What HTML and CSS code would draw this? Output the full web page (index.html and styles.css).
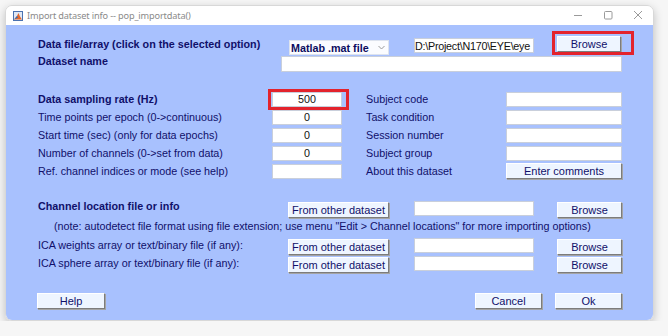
FILE: index.html
```html
<!DOCTYPE html>
<html lang="en">
<head>
  <meta charset="UTF-8">
  <title>Import dataset info -- pop_importdata()</title>
  <link rel="stylesheet" href="styles.css">
</head>
<body>
  <div class="window">
    <div class="titlebar">
      <svg class="app-icon" width="10" height="10" viewBox="0 0 10 10">
        <rect x="0.5" y="0.5" width="9" height="9" fill="#dfe8f5" stroke="#4a72b0"/>
        <path d="M1 8.5 L4 5 L5.5 2 L7 5.5 L9 8.5 Z" fill="#e4672a"/>
        <path d="M1 8.5 L4 5 L5 6.5 Z" fill="#2f6db8"/>
      </svg>
      <span class="title">Import dataset info -- pop_importdata()</span>
      <div class="controls">
        <svg width="10" height="10" viewBox="0 0 10 10"><path d="M1 5.5 H9" stroke="#9a9a9a" stroke-width="1"/></svg>
        <svg width="10" height="10" viewBox="0 0 10 10"><rect x="1.5" y="1.5" width="7.5" height="7.5" rx="1" fill="none" stroke="#9a9a9a"/></svg>
        <svg width="10" height="10" viewBox="0 0 10 10"><path d="M1 1 L9 9 M9 1 L1 9" stroke="#9a9a9a" stroke-width="1"/></svg>
      </div>
    </div>

    <div class="panel">
      <div class="row">
        <span class="label bold w-file">Data file/array (click on the selected option)</span>
        <div class="popup">
          <span>Matlab .mat file</span>
          <svg width="7" height="5" viewBox="0 0 7 5"><path d="M0.5 1 L3.5 4 L6.5 1" fill="none" stroke="#9a9a9a"/></svg>
        </div>
        <input class="edit path" type="text" value="D:\Project\N170\EYE\eye" readonly>
        <div class="marked">
          <button class="btn browse-top">Browse</button>
          <span class="redbox redbox-browse"></span>
        </div>
      </div>
      <div class="row">
        <span class="label bold w-name">Dataset name</span>
        <input class="edit name" type="text" readonly>
      </div>

      <div class="row section">
        <span class="label bold w-info">Data sampling rate (Hz)</span>
        <div class="marked">
          <input class="edit num" type="text" value="500" readonly>
          <span class="redbox redbox-rate"></span>
        </div>
        <span class="label w-side">Subject code</span>
        <input class="edit side" type="text" readonly>
      </div>
      <div class="row">
        <span class="label w-info">Time points per epoch (0-&gt;continuous)</span>
        <input class="edit num" type="text" value="0" readonly>
        <span class="label w-side">Task condition</span>
        <input class="edit side" type="text" readonly>
      </div>
      <div class="row">
        <span class="label w-info">Start time (sec) (only for data epochs)</span>
        <input class="edit num" type="text" value="0" readonly>
        <span class="label w-side">Session number</span>
        <input class="edit side" type="text" readonly>
      </div>
      <div class="row">
        <span class="label w-info">Number of channels (0-&gt;set from data)</span>
        <input class="edit num" type="text" value="0" readonly>
        <span class="label w-side">Subject group</span>
        <input class="edit side" type="text" readonly>
      </div>
      <div class="row">
        <span class="label w-info">Ref. channel indices or mode (see help)</span>
        <input class="edit num" type="text" readonly>
        <span class="label w-side">About this dataset</span>
        <button class="btn side">Enter comments</button>
      </div>

      <div class="row section">
        <span class="label bold w-chan">Channel location file or info</span>
        <button class="btn other">From other dataset</button>
        <input class="edit file" type="text" readonly>
        <button class="btn browse">Browse</button>
      </div>
      <div class="row note">
        (note: autodetect file format using file extension; use menu "Edit &gt; Channel locations" for more importing options)
      </div>
      <div class="row ica">
        <span class="label w-chan">ICA weights array or text/binary file (if any):</span>
        <button class="btn other">From other dataset</button>
        <input class="edit file" type="text" readonly>
        <button class="btn browse">Browse</button>
      </div>
      <div class="row">
        <span class="label w-chan">ICA sphere array or text/binary file (if any):</span>
        <button class="btn other">From other dataset</button>
        <input class="edit file" type="text" readonly>
        <button class="btn browse">Browse</button>
      </div>

      <div class="row actions">
        <button class="btn action help">Help</button>
        <button class="btn action cancel">Cancel</button>
        <button class="btn action">Ok</button>
      </div>
    </div>
  </div>
</body>
</html>
```

FILE: styles.css
```css
body {
  margin: 0;
  background: #f6f6f6;
  font-family: "Liberation Sans", Arial, sans-serif;
  font-size: 10.75px;
  color: #10106a;
}
.window {
  margin: 5px 0 0 5px;
  width: 649px;
  height: 316px;
  border-radius: 7px;
  overflow: hidden;
  border: 1px solid #d8d8d8;
  box-sizing: border-box;
  box-shadow: 0 3px 10px rgba(0, 0, 0, 0.22);
  display: flex;
  flex-direction: column;
}
.titlebar {
  height: 19px;
  background: #ffffff;
  display: flex;
  align-items: center;
  padding-left: 7px;
  flex: none;
}
.app-icon {
  margin-right: 4px;
}
.title {
  font-family: "Noto Sans", sans-serif;
  font-size: 9.2px;
  letter-spacing: -0.15px;
  color: #8a8a8a;
}
.controls {
  margin-left: auto;
  display: flex;
  gap: 20px;
  margin-right: 10px;
  margin-top: -2px;
}
.panel {
  flex: 1;
  background: #a8c1fe;
  padding: 10px 0 0 32px;
}
.row {
  display: flex;
  align-items: center;
  height: 18px;
}
.section {
  margin-top: 19px;
}
.ica {
  margin-top: 1px;
}
.actions {
  margin-top: 20px;
  margin-left: -1px;
  padding-right: 31px;
}
.label {
  flex: none;
  white-space: nowrap;
}
.bold {
  font-weight: bold;
}
.w-file { width: 251px; }
.w-name { width: 243px; margin-top: -2px; }
.w-info { width: 234px; }
.w-side { width: 140px; margin-left: 24px; }
.w-chan { width: 250px; }
.w-chan.bold { margin-top: -5px; }
.note {
  padding-left: 16px;
  white-space: nowrap;
}

.edit {
  flex: none;
  box-sizing: border-box;
  height: 15px;
  padding: 0 2px;
  margin: 0;
  border: 1px solid #c9cfdb;
  background: #ffffff;
  font: inherit;
  color: #111111;
  outline: none;
}
.edit.path {
  width: 120px;
  margin-left: 25px;
  margin-top: 3px;
  padding: 0;
  letter-spacing: -0.25px;
}
.edit.name {
  width: 341px;
  height: 16px;
  margin-top: 4px;
}
.edit.num {
  width: 70px;
  text-align: center;
}
.edit.side {
  width: 116px;
}
.edit.file {
  width: 120px;
  margin-left: 25px;
  margin-right: 23px;
}

.popup {
  flex: none;
  box-sizing: border-box;
  width: 100px;
  height: 15px;
  margin-top: 7px;
  background: #fbfcff;
  border: 1px solid #dde3ee;
  display: flex;
  align-items: center;
  justify-content: space-between;
  padding: 0 3px 0 1px;
  font-weight: bold;
  color: #0c0c60;
}

.btn {
  flex: none;
  box-sizing: border-box;
  height: 16px;
  padding: 0;
  background: #eef5ff;
  border: 1px solid;
  border-color: #ffffff #7c7c7c #7c7c7c #ffffff;
  box-shadow: 1px 1px 0 #a4a4a4;
  font: inherit;
  font-size: 11px;
  color: #10106a;
  cursor: pointer;
}
.browse-top {
  width: 64px;
  margin-left: 23px;
}
.btn.side {
  width: 116px;
}
.btn.other {
  width: 101px;
  margin-top: 3px;
}
.btn.browse {
  width: 65px;
  margin-top: 3px;
}
.btn.action {
  width: 67px;
}
.btn.help {
  width: 68px;
}
.btn.cancel {
  margin-left: auto;
  margin-right: 13px;
}

.marked {
  position: relative;
  display: flex;
  flex: none;
}
.redbox {
  position: absolute;
  border: 3px solid #e3232c;
  pointer-events: none;
}
.redbox-browse {
  left: 18px;
  top: -5px;
  right: -13px;
  bottom: -3px;
}
.redbox-rate {
  left: -4px;
  top: -3px;
  right: -7px;
  bottom: -3px;
}
```
